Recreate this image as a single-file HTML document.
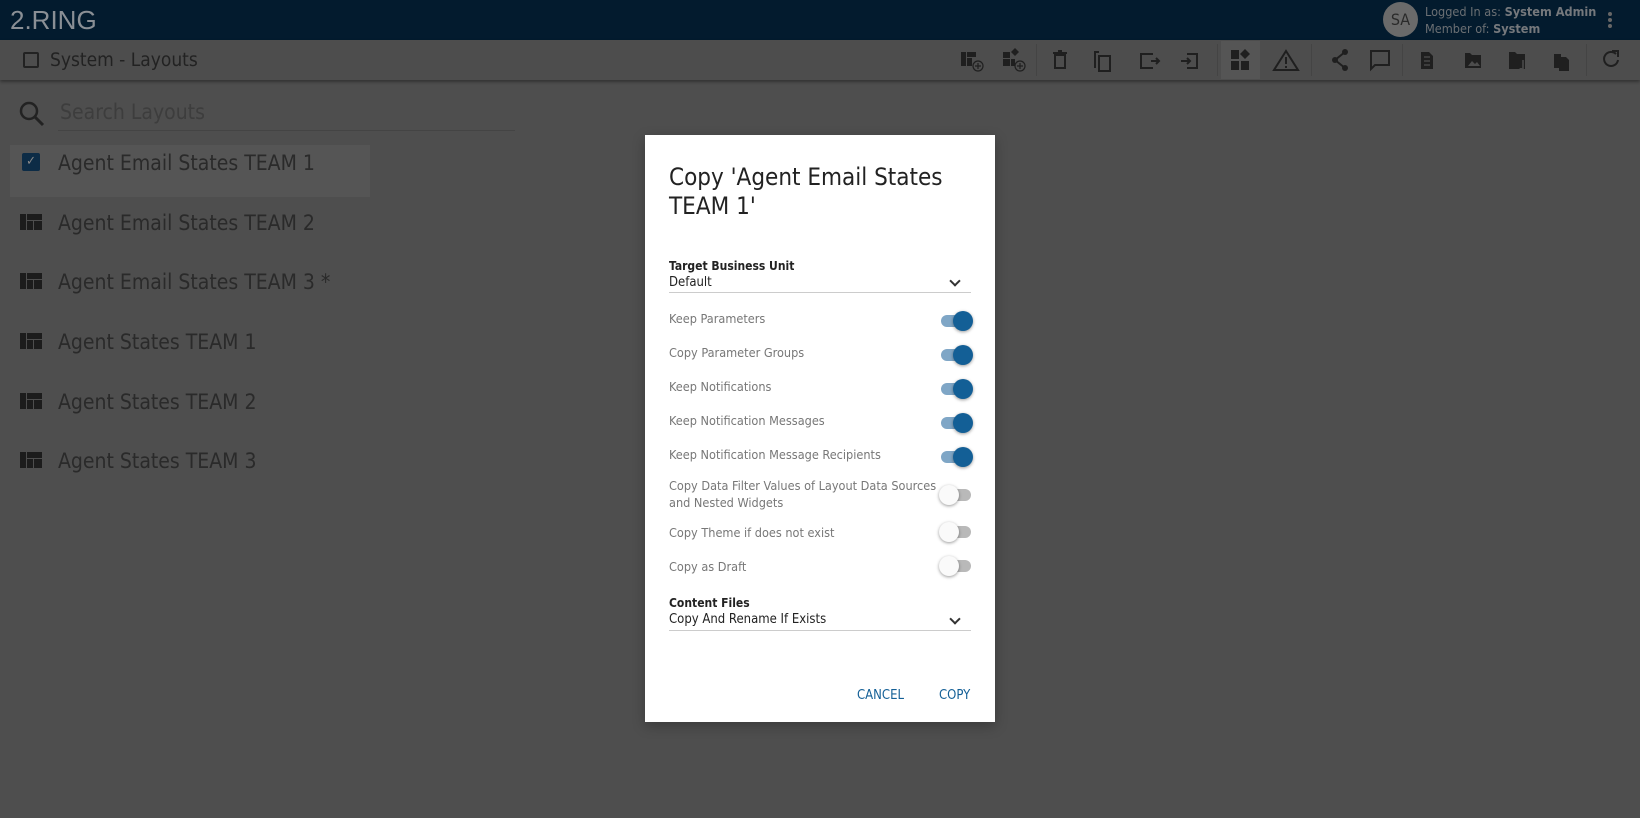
<!DOCTYPE html>
<html><head><meta charset="utf-8"><style>
*{margin:0;padding:0;box-sizing:border-box}
body{width:1640px;height:818px;overflow:hidden;background:#4e4e4e;font-family:"Liberation Sans Narrow","DejaVu Sans Condensed","Liberation Sans",sans-serif;position:relative;color:#2b2b2b}
.a{position:absolute;white-space:nowrap}
#top{position:absolute;left:0;top:0;width:1640px;height:40px;background:#031b2e}
#tb{position:absolute;left:0;top:40px;width:1640px;height:40px;background:#4d4d4d;box-shadow:0 2px 3px rgba(0,0,0,.35)}
.sep{position:absolute;top:44px;width:1px;height:32px;background:#444}
.item{font-size:21px;color:#2a2a2a}
.li{position:absolute;left:20px;width:22px;height:18px}
#dlg{position:absolute;left:645px;top:135px;width:350px;height:587px;background:#fff;box-shadow:0 4px 12px rgba(0,0,0,.25)}
.lbl{font-size:12.6px;color:#777}
.tg{position:absolute;left:296px;width:30px;height:12px;border-radius:6px}
.tg.on{background:#7fa6c6}
.tg.off{background:#b9b9b9}
.th{position:absolute;top:-4px;width:20px;height:20px;border-radius:50%;box-shadow:0 1px 3px rgba(0,0,0,.4)}
.on .th{left:12px;background:#135f96}
.off .th{left:-2px;background:#fafafa}
.cv{position:absolute;left:306px;width:8px;height:8px;border-right:2px solid #333;border-bottom:2px solid #333;transform:rotate(45deg)}
</style></head><body>
<div id="top"></div>
<div class="a" style="left:10px;top:5px;font-size:26px;color:#8a8f95;font-family:'Liberation Sans',sans-serif">2.RING</div>
<div class="a" style="left:1383px;top:2px;width:35px;height:35px;border-radius:50%;background:#6a6a6a;color:#2a2a2a;font-size:16px;line-height:35px;text-align:center">SA</div>
<div class="a" style="left:1425px;top:4px;font-size:12.6px;color:#6b6f73">Logged In as: <b style="color:#75787c">System Admin</b></div>
<div class="a" style="left:1425px;top:21px;font-size:12.6px;color:#6b6f73">Member of: <b style="color:#75787c">System</b></div>
<div class="a" style="left:1608px;top:12px;width:4px;height:4px;background:#666;border-radius:50%;box-shadow:0 6px 0 #666,0 12px 0 #666"></div>
<div id="tb"></div>
<div class="a" style="left:23px;top:52px;width:16px;height:16px;border:2px solid #222;border-radius:2px"></div>
<div class="a" style="left:50px;top:49px;font-size:19px;color:#222">System - Layouts</div>
<div class="a" style="left:1221px;top:41px;width:39px;height:38px;background:#555"></div>
<svg class="a" style="left:955px;top:44px" width="680" height="34" fill="#1f1f1f" stroke="#1f1f1f">
<g stroke="none"><rect x="6" y="8" width="5" height="14"/><rect x="12" y="8" width="9" height="5"/><rect x="12" y="14" width="5" height="8"/></g>
<circle cx="23" cy="22" r="5" fill="none" stroke-width="1.2"/><path d="M23 19v6M20 22h6" stroke-width="1.2"/>
<g stroke="none"><rect x="48" y="8" width="7" height="6"/><rect x="48" y="15" width="7" height="7"/><rect x="56" y="15" width="4" height="7"/><path d="M60 4l4 4-4 4-4-4z"/></g>
<circle cx="65" cy="22" r="5" fill="none" stroke-width="1.2"/><path d="M65 19v6M62 22h6" stroke-width="1.2"/>
<g fill="none" stroke-width="2"><path d="M100 11h10v13h-10zM98 9h14M103 7h4"/>
<path d="M144 8h-4v16M144 12h11v15h-11z"/>
<path d="M198 10h-12v14h12M196 17h8M201 14l3 3-3 3"/>
<path d="M232 10h10v14h-10M226 17h9M232 14l3 3-3 3"/></g>
<g stroke="none"><rect x="276" y="6" width="8" height="9"/><rect x="276" y="17" width="8" height="9"/><rect x="286" y="17" width="8" height="9"/><path d="M290 5l5 5-5 5-5-5z"/></g>
<path d="M331 7l12 19h-24z" fill="none" stroke-width="2"/><path d="M331 13v7M331 22v2" stroke-width="2"/>
<g stroke-width="2"><path d="M390 8l-10 8 10 8" fill="none"/></g><circle cx="390" cy="8" r="3" stroke="none"/><circle cx="380" cy="16" r="3" stroke="none"/><circle cx="390" cy="24" r="3" stroke="none"/>
<path d="M416 7h18v14h-14l-4 4z" fill="none" stroke-width="2"/>
<g stroke="none"><path d="M466 8h8l4 4v13h-12z"/><path d="M510 9h5l2 2h9v13h-16z"/><path d="M554 8h6l2 2h8v15h-16z"/><path d="M599 10h7v14h-7z"/><path d="M604 13h7l3 3v11h-10z"/></g>
<path d="M469 13h6M469 17h6M469 21h6" stroke="#4d4d4d" stroke-width="1.2"/>
<path d="M513 22l4-5 3 3 2-2 3 4z" fill="#4d4d4d" stroke="none"/>
<path d="M568 16v10" stroke="#4d4d4d" stroke-width="1.5"/><circle cx="566" cy="26" r="2" fill="#4d4d4d" stroke="none"/>
<path d="M661 10a7 7 0 1 0 2 6" fill="none" stroke-width="2"/><path d="M657 7h6v6" fill="none" stroke-width="2"/>
</svg>
<div class="sep" style="left:1036px"></div><div class="sep" style="left:1217px"></div><div class="sep" style="left:1311px"></div><div class="sep" style="left:1402px"></div><div class="sep" style="left:1586px"></div>

<svg class="a" style="left:18px;top:100px" width="30" height="30"><circle cx="11" cy="11" r="8" fill="none" stroke="#222" stroke-width="2.5"/><path d="M17 17l8 8" stroke="#222" stroke-width="3"/></svg>
<div class="a" style="left:60px;top:100px;font-size:21px;color:#3d3d3d">Search Layouts</div>
<div class="a" style="left:58px;top:130px;width:457px;height:1px;background:#444"></div>
<div class="a" style="left:10px;top:145px;width:360px;height:52px;background:#555"></div>
<div class="a" style="left:22px;top:153px;width:18px;height:18px;background:#0d2c46;border-radius:2px;color:#888;font-size:13px;text-align:center;line-height:18px">✓</div>
<div class="a item" style="left:58px;top:151px">Agent Email States TEAM 1</div>
<svg width="0" height="0"><defs><g id="lay"><rect x="0" y="0" width="6" height="16" fill="#1c1c1c"/><rect x="7" y="0" width="15" height="6" fill="#1c1c1c"/><rect x="7" y="7" width="6" height="9" fill="#1c1c1c"/><rect x="14" y="7" width="8" height="9" fill="#1c1c1c"/></g></defs></svg>
<svg class="li" style="top:214px"><use href="#lay"/></svg><div class="a item" style="left:58px;top:211px">Agent Email States TEAM 2</div>
<svg class="li" style="top:273px"><use href="#lay"/></svg><div class="a item" style="left:58px;top:270px">Agent Email States TEAM 3 *</div>
<svg class="li" style="top:333px"><use href="#lay"/></svg><div class="a item" style="left:58px;top:330px">Agent States TEAM 1</div>
<svg class="li" style="top:393px"><use href="#lay"/></svg><div class="a item" style="left:58px;top:390px">Agent States TEAM 2</div>
<svg class="li" style="top:452px"><use href="#lay"/></svg><div class="a item" style="left:58px;top:449px">Agent States TEAM 3</div>

<div id="dlg">
<div class="a" style="left:24px;top:28px;font-size:24px;line-height:29px;color:#222">Copy 'Agent Email States<br>TEAM 1'</div>
<div class="a" style="left:24px;top:124px;font-size:12px;font-weight:bold;color:#222">Target Business Unit</div>
<div class="a" style="left:24px;top:140px;font-size:13px;color:#222">Default</div>
<div class="cv" style="top:142px"></div>
<div class="a" style="left:24px;top:157px;width:302px;height:1px;background:#ccc"></div>
<div class="a lbl" style="left:24px;top:176px">Keep Parameters</div><div class="tg on" style="top:180px"><div class="th"></div></div>
<div class="a lbl" style="left:24px;top:210px">Copy Parameter Groups</div><div class="tg on" style="top:214px"><div class="th"></div></div>
<div class="a lbl" style="left:24px;top:244px">Keep Notifications</div><div class="tg on" style="top:248px"><div class="th"></div></div>
<div class="a lbl" style="left:24px;top:278px">Keep Notification Messages</div><div class="tg on" style="top:282px"><div class="th"></div></div>
<div class="a lbl" style="left:24px;top:312px">Keep Notification Message Recipients</div><div class="tg on" style="top:316px"><div class="th"></div></div>
<div class="a lbl" style="left:24px;top:342px;line-height:17px">Copy Data Filter Values of Layout Data Sources<br>and Nested Widgets</div><div class="tg off" style="top:354px"><div class="th"></div></div>
<div class="a lbl" style="left:24px;top:390px">Copy Theme if does not exist</div><div class="tg off" style="top:391px"><div class="th"></div></div>
<div class="a lbl" style="left:24px;top:424px">Copy as Draft</div><div class="tg off" style="top:425px"><div class="th"></div></div>
<div class="a" style="left:24px;top:461px;font-size:12px;font-weight:bold;color:#222">Content Files</div>
<div class="a" style="left:24px;top:477px;font-size:13px;color:#222">Copy And Rename If Exists</div>
<div class="cv" style="top:480px"></div>
<div class="a" style="left:24px;top:495px;width:302px;height:1px;background:#ccc"></div>
<div class="a" style="left:212px;top:553px;font-size:13px;color:#135f96">CANCEL</div>
<div class="a" style="left:294px;top:553px;font-size:13px;color:#135f96">COPY</div>
</div>
</body></html>
